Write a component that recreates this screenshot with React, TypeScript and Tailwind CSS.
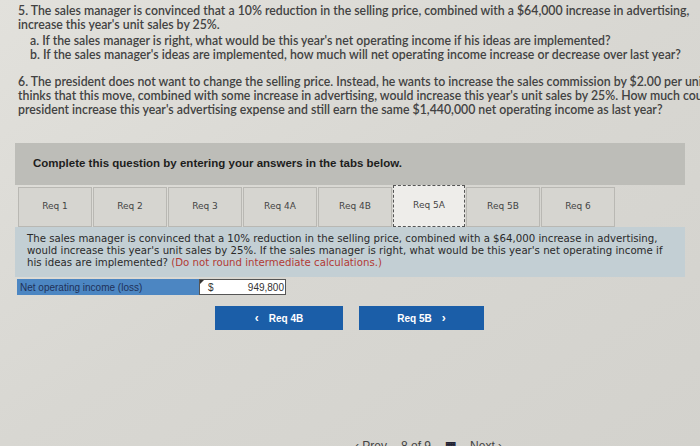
import React from "react";

const tabs = ["Req 1", "Req 2", "Req 3", "Req 4A", "Req 4B", "Req 5A", "Req 5B", "Req 6"];

const App = () => {
  return (
    <div className="w-[700px] h-[446px] overflow-hidden bg-gradient-to-br from-[#e2e1dc] via-[#d8d7d2] to-[#d3d2cd] font-['Lato',sans-serif] text-[#424242]">
      {/* question text */}
      <div className="pl-[18px] pt-[4px] text-[12.3px] leading-[13.5px] font-semibold whitespace-nowrap">
        <p>5. The sales manager is convinced that a 10% reduction in the selling price, combined with a $64,000 increase in advertising,</p>
        <p>increase this year's unit sales by 25%.</p>
        <div className="pl-[12px] pt-[3px]">
          <p>a. If the sales manager is right, what would be this year's net operating income if his ideas are implemented?</p>
          <p>b. If the sales manager's ideas are implemented, how much will net operating income increase or decrease over last year?</p>
        </div>
        <div className="pt-[14px] leading-[14px]">
          <p>6. The president does not want to change the selling price. Instead, he wants to increase the sales commission by $2.00 per unit. He</p>
          <p>thinks that this move, combined with some increase in advertising, would increase this year's unit sales by 25%. How much could the</p>
          <p>president increase this year's advertising expense and still earn the same $1,440,000 net operating income as last year?</p>
        </div>
      </div>

      {/* instructions bar */}
      <div className="mx-[15px] mt-[26px] h-[42px] bg-[#bdbdb8] flex items-center pl-[18px]">
        <span className="font-['Liberation_Sans',sans-serif] font-bold text-[11.5px] text-[#1d1d1d]">
          Complete this question by entering your answers in the tabs below.
        </span>
      </div>

      {/* tabs */}
      <div className="ml-[18px] flex font-['DejaVu_Sans',sans-serif] text-[9px] text-[#444]">
        {tabs.map((t) => (
          <div
            key={t}
            className={
              t === "Req 5A"
                ? "w-[72px] h-[42px] mr-[1px] flex items-center justify-center bg-[#eeedea] border border-dashed border-[#555]"
                : "w-[74px] h-[40px] mt-[2px] mr-[1px] flex items-center justify-center bg-[#d6d5d0] border border-[#b9b8b3]"
            }
          >
            {t}
          </div>
        ))}
      </div>

      {/* prompt */}
      <div className="mx-[15px] h-[50px] bg-[#c3cfd4] pl-[12px] pt-[6px] font-['DejaVu_Sans',sans-serif] text-[10.2px] leading-[12px] text-[#2a2a2a] whitespace-nowrap">
        <p>The sales manager is convinced that a 10% reduction in the selling price, combined with a $64,000 increase in advertising,</p>
        <p>would increase this year's unit sales by 25%. If the sales manager is right, what would be this year's net operating income if</p>
        <p>
          his ideas are implemented? <span className="text-[#b23a35]">(Do not round intermediate calculations.)</span>
        </p>
      </div>

      {/* answer row */}
      <div className="ml-[17px] mt-[2px] flex h-[16px] font-['Liberation_Sans',sans-serif] text-[10px]">
        <div className="w-[182px] bg-[#4c86c2] text-[#1f3159] pl-[3px] flex items-center">
          Net operating income (loss)
        </div>
        <div className="relative w-[87px] bg-white border border-[#555] flex items-center justify-between px-[8px] text-[#333]">
          <span className="absolute left-0 top-0 w-0 h-0 border-t-[4px] border-r-[4px] border-t-[#333] border-r-transparent" />
          <span>$</span>
          <span className="-mr-[7px]">949,800</span>
        </div>
      </div>

      {/* nav buttons */}
      <div className="ml-[215px] mt-[11px] flex gap-[16px] font-['Liberation_Sans',sans-serif] font-bold text-[10px] text-white">
        <div className="w-[128px] h-[24px] bg-[#1b5ea8] flex items-center justify-center gap-[10px]">
          <span className="text-[12px]">‹</span>
          <span>Req 4B</span>
        </div>
        <div className="w-[125px] h-[24px] bg-[#1b5ea8] flex items-center justify-center gap-[10px]">
          <span>Req 5B</span>
          <span className="text-[12px]">›</span>
        </div>
      </div>

      {/* pager (cut off at bottom edge, as in the shot) */}
      <div className="ml-[355px] mt-[107px] flex items-center gap-[14px] font-['Liberation_Sans',sans-serif] text-[12px] text-[#444]">
        <span>‹ Prev</span>
        <span>8 of 9</span>
        <span className="font-bold text-[#223]">▦</span>
        <span>Next ›</span>
      </div>
    </div>
  );
};

export default App;
